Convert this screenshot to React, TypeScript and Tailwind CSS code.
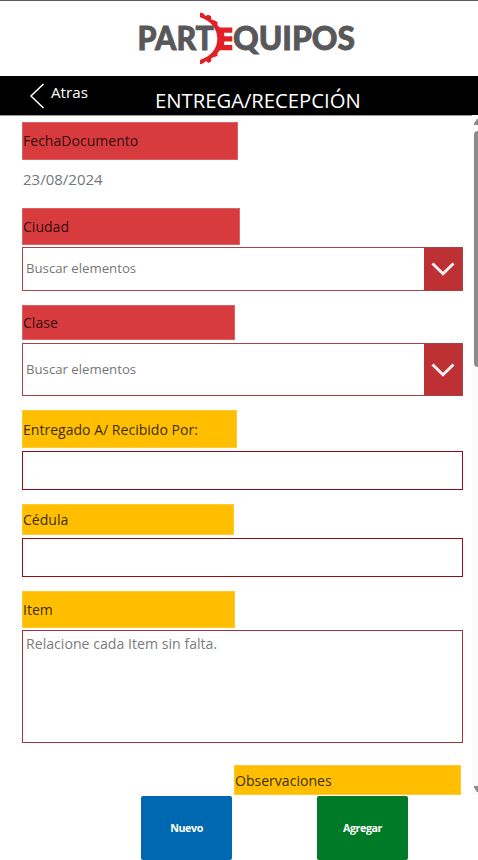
import type { ReactNode } from "react";

function Logo() {
  return (
    <svg width="218" height="54" viewBox="138 12 218 54" className="mt-3 ml-[138px] block font-['Lato',sans-serif]" fontWeight="900" fontSize="31.4">
      <g fill="#58585a" stroke="#58585a" strokeWidth="0.8">
        <text x="137.5" y="50.2" textLength="76.5" lengthAdjust="spacingAndGlyphs">PART</text>
        <text x="233" y="50.2" textLength="122" lengthAdjust="spacingAndGlyphs">QUIPOS</text>
      </g>
      <path
        d="M200 12.5L203.5 13.5L205.5 16L208 14.7L211 16L211.3 19.5L214 20.3L217.5 22L217.5 25.5L220 27.5H232.3V32.8H224L224.4 36.3H232.3V41.5H224.4L224 45H232.3V50.3H220L217.5 53L217.5 56L214.5 57L211.5 58L211 61.5L208.5 63L206 61L203 63.5L200 64.3V60C211 56 217.3 49 217.3 38.8C217.3 28.5 211 21 200 17.3Z"
        fill="#e21f26"
      />
    </svg>
  );
}

function Label({ className, children }: { className: string; children: ReactNode }) {
  return <label className={`flex items-center border text-[14.05px] text-black/80 ${className}`}>{children}</label>;
}

function Select({ className }: { className: string }) {
  return (
    <div className={`flex w-[441px] border border-[#a94245] ${className}`}>
      <span className="flex flex-1 items-center pl-[3px] text-[13.2px] text-[#767676]">Buscar elementos</span>
      <button className="flex w-[38px] items-center justify-center bg-[#bd3033]">
        <svg width="24" height="14" viewBox="0 0 24 14" fill="none" stroke="#f5f2f6" strokeWidth="2.9">
          <path d="M1.5 1.5L12 11.7L22.5 1.5" />
        </svg>
      </button>
    </div>
  );
}

const red = "bg-[#d73b3e] border-[#dd6265]";
const yellow = "bg-[#ffbf00] border-[#ffca30]";

export default function App() {
  return (
    <div className="flex h-[860px] w-[478px] flex-col overflow-hidden bg-white font-['Open_Sans',sans-serif]">
      <header className="h-[76px] shrink-0 border-t border-[#5c5c5c]">
        <div className="-mt-px">
          <Logo />
        </div>
      </header>
      <nav className="flex h-[39px] shrink-0 items-start bg-black text-white">
        <svg width="16" height="26" viewBox="0 0 16 26" fill="none" stroke="white" strokeWidth="1.5" className="mt-[7px] ml-[29px]">
          <path d="M14.5 1L2 13L14.5 25" />
        </svg>
        <span className="mt-[6px] ml-[6px] w-[104px] text-[15.2px] leading-5">Atras</span>
        <h1 className="mt-[10px] text-[20.25px] leading-7 whitespace-nowrap">ENTREGA/RECEPCIÓN</h1>
      </nav>
      <div className="flex h-[680px] shrink-0">
        <main className="flex w-[472px] flex-col items-start border-t border-[#999999] pl-[22px]">
          <Label className={`mt-[6px] h-[38px] w-[216px] ${red}`}>FechaDocumento</Label>
          <span className="mt-[9px] pl-px text-[15px] leading-5 text-[#72797c]">23/08/2024</span>
          <Label className={`mt-[19px] h-[37px] w-[218px] ${red}`}>Ciudad</Label>
          <Select className="mt-[2px] h-[44px]" />
          <Label className={`mt-[14px] h-[35px] w-[213px] ${red}`}>Clase</Label>
          <Select className="mt-[3px] h-[53px]" />
          <Label className={`mt-[14px] h-[38px] w-[215px] pt-px ${yellow}`}>Entregado A/ Recibido Por:</Label>
          <div className="mt-[3px] h-[39px] w-[441px] border border-[#930c10]" />
          <Label className={`mt-[14px] h-[31px] w-[212px] ${yellow}`}>Cédula</Label>
          <div className="mt-[3px] h-[39px] w-[441px] border border-[#930c10]" />
          <Label className={`mt-[14px] h-[37px] w-[213px] ${yellow}`}>Item</Label>
          <div className="mt-[2px] h-[113px] w-[441px] border border-[#a63338] pt-[3px] pl-[3px] text-[14.15px] leading-5 text-[#7c7c7c]">
            Relacione cada Item sin falta.
          </div>
          <Label className={`mt-[22px] ml-[212px] h-[30px] w-[227px] pt-[2px] ${yellow}`}>Observaciones</Label>
        </main>
        <aside className="flex w-[6px] flex-col items-end overflow-hidden bg-[#fbfbfb]">
          <svg width="4" height="6" viewBox="0 0 4 6" className="mt-[4px] shrink-0" fill="#8b8b8b">
            <path d="M0 6V4.5L3 0H4V6Z" />
          </svg>
          <div className="mt-[6px] h-[236px] w-[4px] shrink-0 rounded-l-[4px] bg-[#8b8b8b]" />
          <svg width="4" height="6" viewBox="0 0 4 6" className="mt-auto mb-[3px] shrink-0" fill="#8b8b8b">
            <path d="M0 0V1.5L3 6H4V0Z" />
          </svg>
        </aside>
      </div>
      <footer className="flex flex-1 items-stretch gap-[85px] pt-px pl-[141px] text-[10.7px] font-bold tracking-[-0.4px] text-white">
        <button className="w-[91px] rounded-[2px] bg-[#0068b1]">Nuevo</button>
        <button className="w-[91px] rounded-[2px] bg-[#007a27]">Agregar</button>
      </footer>
    </div>
  );
}
